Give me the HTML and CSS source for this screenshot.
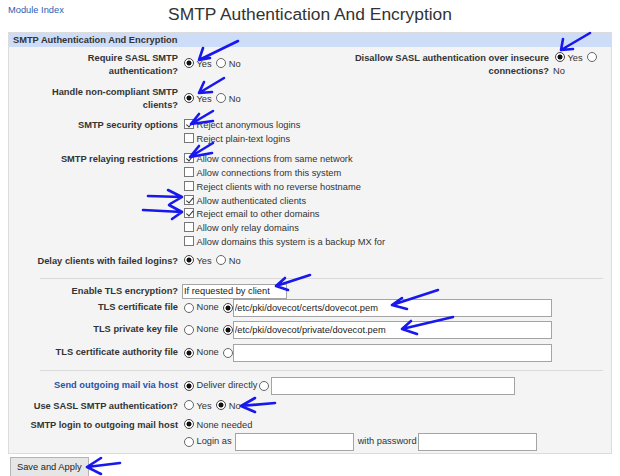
FILE: index.html
```html
<!DOCTYPE html>
<html lang="en">
<head>
  <meta charset="UTF-8" />
  <meta name="viewport" content="width=device-width, initial-scale=1.0"/>
  <title>SMTP Authentication And Encryption</title>
  <link rel="stylesheet" href="styles.css">
</head>
<body>

  <div class="top">
    <a class="index" href="#">Module Index</a>
    <h1>SMTP Authentication And Encryption</h1>
    <span></span>
  </div>

  <form class="panel">
    <div class="panel-head">SMTP Authentication And Encryption</div>

    <div class="row pair">
      <div class="label">Require SASL SMTP authentication?</div>
      <div class="value"><span class="radio on"></span>Yes <span class="radio"></span>No</div>
      <div class="label">Disallow SASL authentication over insecure connections?</div>
      <div class="value"><span class="radio on"></span>Yes <span class="radio"></span><wbr>No</div>
    </div>

    <div class="row r2">
      <div class="label">Handle non-compliant SMTP clients?</div>
      <div class="value"><span class="radio on"></span>Yes <span class="radio"></span>No</div>
    </div>

    <div class="row list security">
      <div class="label">SMTP security options</div>
      <div class="value">
        <div class="opt"><span class="check on"></span>Reject anonymous logins</div>
        <div class="opt"><span class="check"></span>Reject plain-text logins</div>
      </div>
    </div>

    <div class="row list">
      <div class="label">SMTP relaying restrictions</div>
      <div class="value">
        <div class="opt"><span class="check on"></span>Allow connections from same network</div>
        <div class="opt"><span class="check"></span>Allow connections from this system</div>
        <div class="opt"><span class="check"></span>Reject clients with no reverse hostname</div>
        <div class="opt"><span class="check on"></span>Allow authenticated clients</div>
        <div class="opt"><span class="check on"></span>Reject email to other domains</div>
        <div class="opt"><span class="check"></span>Allow only relay domains</div>
        <div class="opt"><span class="check"></span>Allow domains this system is a backup MX for</div>
      </div>
    </div>

    <div class="row delay">
      <div class="label">Delay clients with failed logins?</div>
      <div class="value"><span class="radio on"></span>Yes <span class="radio"></span>No</div>
    </div>

    <div class="sep"></div>

    <div class="row tls-mode">
      <div class="label">Enable TLS encryption?</div>
      <div class="value"><select class="pick"><option>If requested by client</option></select></div>
    </div>

    <div class="row tls-cert">
      <div class="label">TLS certificate file</div>
      <div class="value line">
        <span class="radio"></span><span>None</span><span class="radio on after"></span>
        <input class="field wide" type="text" value="/etc/pki/dovecot/certs/dovecot.pem">
      </div>
    </div>

    <div class="row tls-key">
      <div class="label">TLS private key file</div>
      <div class="value line">
        <span class="radio"></span><span>None</span><span class="radio on after"></span>
        <input class="field wide" type="text" value="/etc/pki/dovecot/private/dovecot.pem">
      </div>
    </div>

    <div class="row tls-ca">
      <div class="label">TLS certificate authority file</div>
      <div class="value line">
        <span class="radio on"></span><span>None</span><span class="radio after"></span>
        <input class="field wide" type="text" value="">
      </div>
    </div>

    <div class="sep"></div>

    <div class="row relay">
      <div class="label"><a class="help" href="#">Send outgoing mail via host</a></div>
      <div class="value line">
        <span class="radio on"></span><span>Deliver directly</span><span class="radio after"></span>
        <input class="field host" type="text" value="">
      </div>
    </div>

    <div class="row sasl">
      <div class="label">Use SASL SMTP authentication?</div>
      <div class="value"><span class="radio"></span>Yes <span class="radio on"></span>No</div>
    </div>

    <div class="row list login">
      <div class="label">SMTP login to outgoing mail host</div>
      <div class="value">
        <div class="opt"><span class="radio on"></span>None needed</div>
        <div class="line">
          <span class="radio"></span><span>Login as</span>
          <input class="field user" type="text" value="">
          <span class="with">with password</span>
          <input class="field user pass" type="password" value="">
        </div>
      </div>
    </div>
  </form>

  <button class="save" type="button">Save and Apply</button>

  <svg class="marks" width="620" height="476" viewBox="0 0 620 476">
    <g fill="none" stroke="#1717ee" stroke-width="2.6" stroke-linecap="round" stroke-linejoin="round">
      <path d="M238 41 L199 60 M203 48 L199 60 L210 58"/>
      <path d="M590 33 L561 50 M563 39 L561 50 L573 49"/>
      <path d="M224 78 L199 93 M204 82 L199 93 L212 92"/>
      <path d="M213 111 L191 124 L213 121 M191 124 L199 114"/>
      <path d="M213 143 L190 157 L212 153 M190 157 L199 146"/>
      <path d="M148 196 L182 197 M168 190 L182 197 L170 204"/>
      <path d="M143 210 L182 212 M169 205 L182 212 L172 219"/>
      <path d="M310 275 L276 286 M285 278 L276 286 L288 290"/>
      <path d="M438 290 L392 305 M402 298 L392 305 L407 309"/>
      <path d="M453 317 L402 329 M411 321 L402 329 L417 334"/>
      <path d="M275 403 L241 406 M255 398 L241 406 L255 412"/>
      <path d="M120 463 L87 467 M101 458 L87 467 L101 474"/>
    </g>
  </svg>

</body>
</html>
```

FILE: styles.css
```css
body {
  margin: 0 8px;
  font-family: "Liberation Sans", Arial, sans-serif;
  font-size: 9.3px;
  color: #333;
  background: #fff;
}

.top {
  display: grid;
  grid-template-columns: 1fr auto 1fr;
  align-items: start;
  padding-top: 3px;
}

.index {
  margin-top: 1px;
  line-height: 13px;
  color: #2d5cb3;
  text-decoration: none;
}

h1 {
  margin: 1px 0 0;
  font-size: 17.4px;
  line-height: 20px;
  font-weight: normal;
  color: #333;
}

.panel {
  margin: 8px 0 0;
  border: 1px solid #dcdcdc;
  background: #f4f4f4;
}

.panel-head {
  background: #cddcf7;
  font-weight: bold;
  line-height: 14px;
  padding-left: 4px;
}

.row {
  display: grid;
  grid-template-columns: 171px 1fr;
  column-gap: 2px;
  align-items: center;
  padding: 3px 0;
  line-height: 13px;
}

.row.pair {
  grid-template-columns: 171px 1fr 218px 50px;
  padding: 4.5px 8px 5px 0;
}

.row.r2 {
  padding: 3.5px 0 3px;
}

.row.list {
  align-items: start;
}

.row.security {
  padding-top: 4px;
}

.list .label,
.opt {
  line-height: 13.9px;
}

.row.delay {
  padding-top: 2px;
}

.label {
  text-align: right;
  font-weight: bold;
  padding: 0 2px 0 9px;
}

.help {
  color: #2a52a6;
  text-decoration: none;
}

.radio,
.check {
  display: inline-block;
  width: 10px;
  height: 10px;
  box-sizing: border-box;
  margin: 0 2.5px 0 2px;
  vertical-align: -1px;
  background: #fff;
}

.radio {
  border: 1px solid #666;
  border-radius: 50%;
}

.radio.on {
  border-color: #444;
  background: radial-gradient(circle, #111 0 2.2px, #fff 2.8px);
}

.check {
  position: relative;
  border: 1px solid #777;
}

.check.on::after {
  content: "";
  position: absolute;
  left: 2.5px;
  top: 0;
  width: 2.5px;
  height: 5.5px;
  border: solid #333;
  border-width: 0 1.4px 1.4px 0;
  transform: rotate(40deg);
}

.line {
  display: flex;
  align-items: center;
  height: 18px;
}

.line .radio {
  flex: none;
  vertical-align: 0;
}

.line .radio.after {
  margin: 0 0 0 4px;
}

.relay .line .radio.after {
  margin: 0 2px 0 2px;
}

.field {
  box-sizing: border-box;
  height: 18px;
  border: 1px solid #a4a4a4;
  background: #fff;
  padding: 0 1px;
  font: inherit;
  color: #222;
}

.field.wide {
  width: 319px;
}

.field.host {
  width: 244px;
}

.field.user {
  width: 119px;
  margin-left: 3px;
}

.field.pass {
  margin-left: 1px;
}

.with {
  margin-left: 4px;
}

.pick {
  display: block;
  appearance: none;
  box-sizing: border-box;
  width: 105px;
  height: 15px;
  border: 1px solid #a4a4a4;
  border-radius: 0;
  background: #fff;
  padding: 0 1px;
  font: inherit;
  color: #222;
}

.sep {
  border-top: 1px solid #dadada;
  margin: 6.5px 8px 0 31px;
}

.row.tls-mode {
  padding: 5px 0 0;
}

.row.tls-cert {
  padding: 0 0 2px;
}

.row.tls-key {
  padding: 2px 0;
}

.row.tls-ca {
  padding: 3px 0 2px;
}

.row.relay {
  padding: 5.5px 0 2px;
}

.row.sasl {
  padding: 3px 0;
}

.row.login {
  padding: 3px 0 2px;
}

.save {
  display: block;
  margin-top: 3px;
  margin-left: 2px;
  height: 20px;
  padding: 0 6px;
  border: 1px solid #b4b4b4;
  border-radius: 0;
  background: #e6e6e6;
  font: inherit;
  color: #222;
}

.marks {
  position: absolute;
  left: 0;
  top: 0;
  pointer-events: none;
}
```
